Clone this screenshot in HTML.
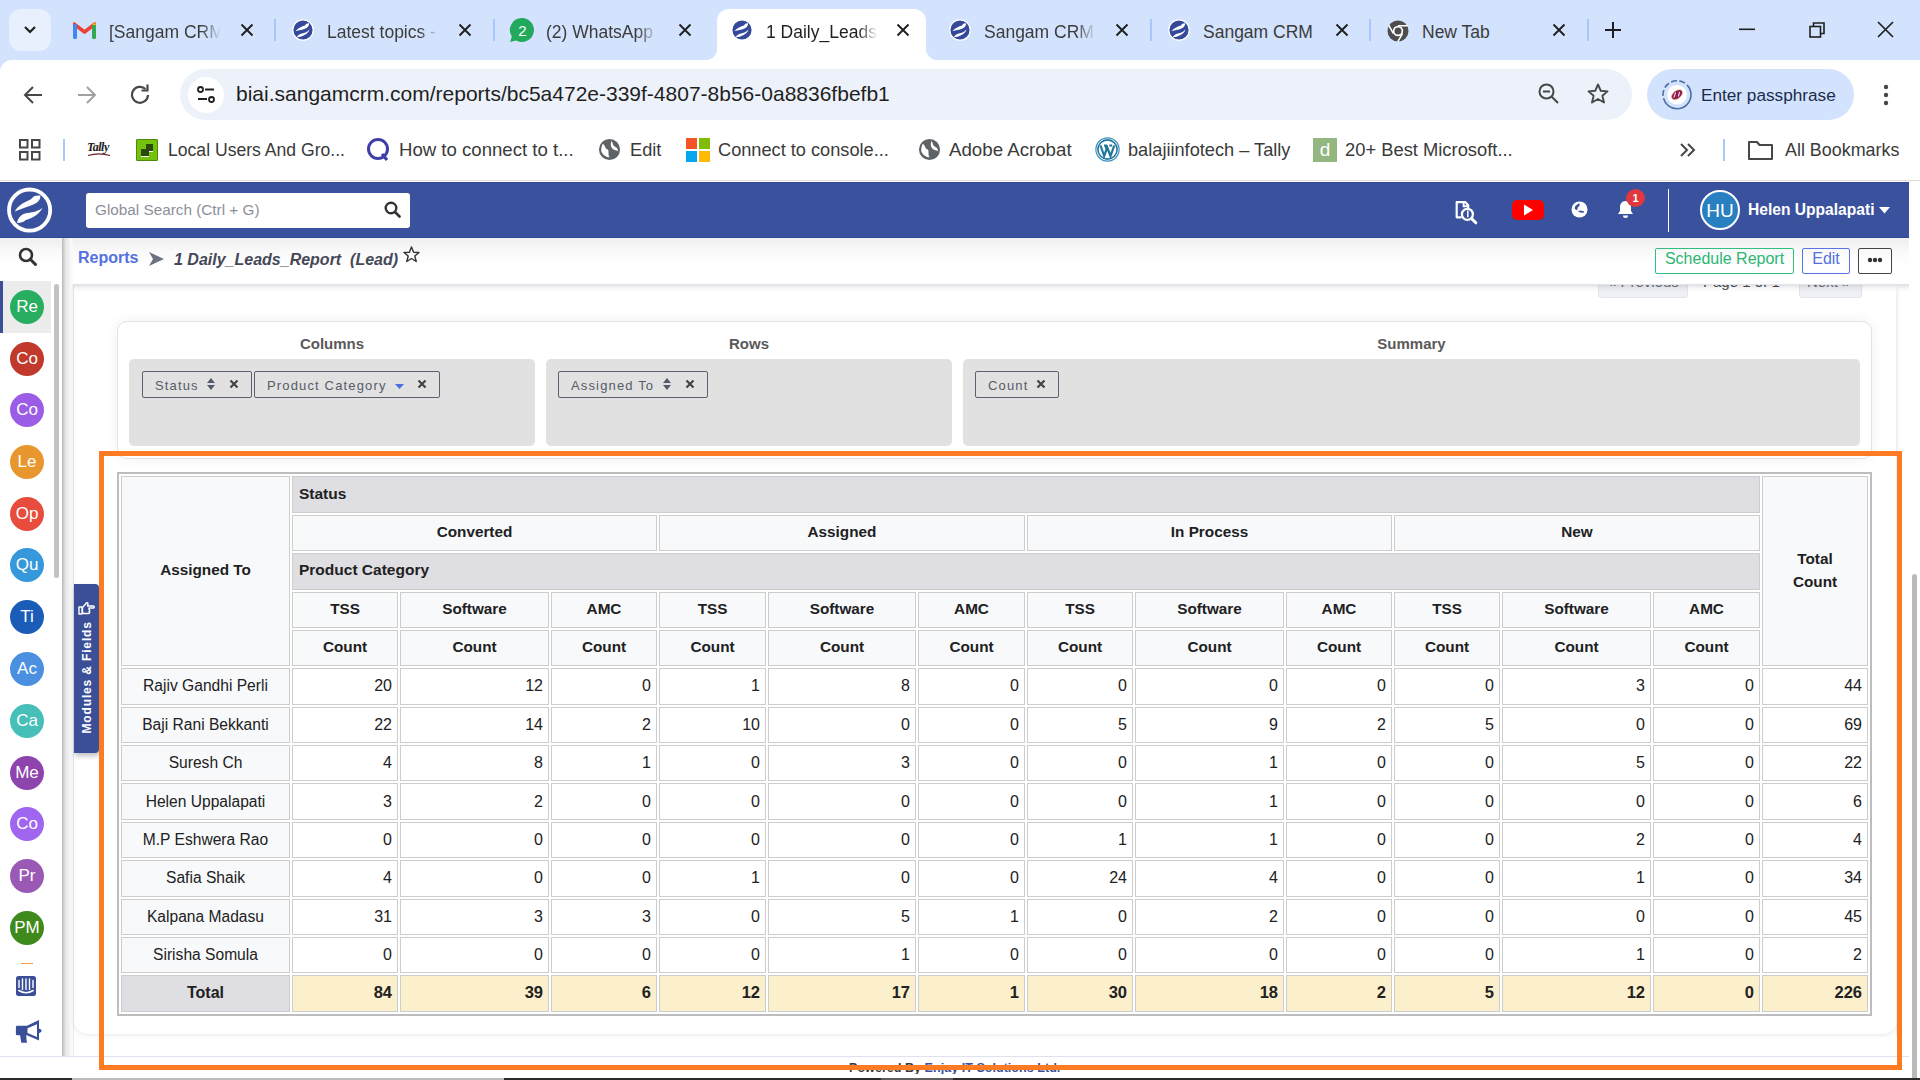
<!DOCTYPE html><html><head><meta charset="utf-8"><style>
*{box-sizing:border-box;margin:0;padding:0}
html,body{width:1920px;height:1080px;overflow:hidden;background:#fff;font-family:"Liberation Sans",sans-serif;position:relative}
.a{position:absolute}
.tabstrip{left:0;top:0;width:1920px;height:60px;background:#d3e3fd}
.toolbar{left:0;top:60px;width:1920px;height:62px;background:#fff}
.bmbar{left:0;top:122px;width:1920px;height:58px;background:#fff}
.tabtxt{font-size:17.5px;color:#1f1f1f;white-space:nowrap;overflow:hidden}
.bmtxt{font-size:18px;color:#3a3a3a;white-space:nowrap}
.hdr{left:0;top:182px;width:1909px;height:56px;background:#3a519d;border-top:1px solid #2c4791;border-bottom:1px solid #2f4993}
.side{left:0;top:238px;width:62px;height:818px;background:#fff}
.circ{width:34px;height:34px;border-radius:50%;color:#fff;font-size:17px;text-align:center;line-height:34px;left:10px}
.cell{position:absolute;border:1px solid #cdcdcd;font-size:16px;color:#212121;white-space:nowrap;display:flex;align-items:center}
.hd{background:#f8f9fb;font-weight:bold;font-size:15.3px;justify-content:center;padding-bottom:2px}
.gr{background:#dfdee3;font-weight:bold;font-size:15.5px;padding-left:6px;padding-bottom:2px}
.nm{background:#f8f9fb;justify-content:center;font-size:15.6px}
.vl{background:#fff;justify-content:flex-end;padding-right:5px}
.tl{background:#dfdee3;font-weight:bold;font-size:16px;justify-content:center;padding-bottom:0px}
.tv{background:#fcefcb;font-weight:bold;font-size:16.5px;justify-content:flex-end;padding-right:5px;padding-bottom:2px}
.chip{position:absolute;top:371px;height:27px;border:1.5px solid #5d6070;border-radius:2px;font-size:13px;letter-spacing:1.15px;color:#575b68;line-height:27px;padding-left:12px;white-space:nowrap}
.lbl{position:absolute;top:335px;font-size:15px;font-weight:bold;color:#5a5a5a;text-align:center}
.gbox{position:absolute;top:359px;height:87px;background:#e1e1e1;border-radius:5px}
</style></head><body>
<div class="a tabstrip"></div>
<div class="a" style="left:9px;top:9px;width:42px;height:42px;border-radius:12px;background:#e9f0fd"></div>
<svg class="a" style="left:22px;top:24px" width="16" height="12" viewBox="0 0 16 12"><path d="M3 3 L8 8 L13 3" stroke="#1f1f1f" stroke-width="2.2" fill="none"/></svg>
<div class="a" style="left:717px;top:9px;width:209px;height:51px;background:#fff;border-radius:12px 12px 0 0"></div>
<div class="a" style="left:705px;top:48px;width:12px;height:12px;background:radial-gradient(circle at 0 0,#d3e3fd 12px,#fff 12.5px)"></div>
<div class="a" style="left:926px;top:48px;width:12px;height:12px;background:radial-gradient(circle at 100% 0,#d3e3fd 12px,#fff 12.5px)"></div>
<svg class="a" style="left:73px;top:21px" width="23" height="18" viewBox="0 0 23 18"><path d="M1 17V3l10.5 8L22 3v14" fill="none" stroke="#ea4335" stroke-width="3.5" stroke-linejoin="round"/><rect x="0" y="3" width="4" height="15" rx="1.5" fill="#4285f4"/><rect x="19" y="3" width="4" height="15" rx="1.5" fill="#34a853"/><path d="M19 4 L22 1.5 L23 4Z" fill="#fbbc04"/></svg>
<div class="a tabtxt" style="left:109px;top:20px;width:112px;height:24px;line-height:24px;color:#3c3c3c;-webkit-mask-image:linear-gradient(90deg,#000 82%,transparent 100%)">[Sangam CRM</div>
<svg class="a" style="left:240px;top:23px" width="14" height="14" viewBox="0 0 14 14"><path d="M1.5 1.5L12.5 12.5M12.5 1.5L1.5 12.5" stroke="#1f1f1f" stroke-width="1.9"/></svg>
<svg class="a" style="left:292px;top:19px" width="22" height="22" viewBox="-11 -11 22 22"><circle cx="0" cy="0" r="10.2" fill="#34499a" stroke="#fff" stroke-width="1.2"/><path d="M-7.5 1.2C-5 -2 -1 -3.5 2 -4.5C3 -6 4 -6.8 6.2 -6.6C6.2 -4.5 4.6 -2.4 2.5 -1.4C-1 0.2 -4 0.2 -7.5 1.2Z" fill="#fff"/><path d="M6.6 -0.8C4.6 2 1.6 3 -1 3.5C-3.5 4 -5.6 5.5 -6.2 7.2C-3.5 7.2 -1 6.2 1 5.2C3.6 4 5.6 2.5 6.6 -0.8Z" fill="#fff"/></svg>
<div class="a tabtxt" style="left:327px;top:20px;width:112px;height:24px;line-height:24px;color:#3c3c3c;-webkit-mask-image:linear-gradient(90deg,#000 82%,transparent 100%)">Latest topics -</div>
<svg class="a" style="left:458px;top:23px" width="14" height="14" viewBox="0 0 14 14"><path d="M1.5 1.5L12.5 12.5M12.5 1.5L1.5 12.5" stroke="#1f1f1f" stroke-width="1.9"/></svg>
<svg class="a" style="left:509px;top:17px" width="26" height="26" viewBox="0 0 26 26"><path d="M13 1A12 12 0 1 1 7 23.4L1.2 25L2.8 19.5A12 12 0 0 1 13 1Z" fill="#22a95b"/><text x="13.5" y="18.5" font-family="Liberation Sans" font-size="15" fill="#fff" text-anchor="middle">2</text></svg>
<div class="a tabtxt" style="left:546px;top:20px;width:112px;height:24px;line-height:24px;color:#3c3c3c;-webkit-mask-image:linear-gradient(90deg,#000 82%,transparent 100%)">(2) WhatsApp</div>
<svg class="a" style="left:678px;top:23px" width="14" height="14" viewBox="0 0 14 14"><path d="M1.5 1.5L12.5 12.5M12.5 1.5L1.5 12.5" stroke="#1f1f1f" stroke-width="1.9"/></svg>
<svg class="a" style="left:731px;top:19px" width="22" height="22" viewBox="-11 -11 22 22"><circle cx="0" cy="0" r="10.2" fill="#34499a" stroke="#fff" stroke-width="1.2"/><path d="M-7.5 1.2C-5 -2 -1 -3.5 2 -4.5C3 -6 4 -6.8 6.2 -6.6C6.2 -4.5 4.6 -2.4 2.5 -1.4C-1 0.2 -4 0.2 -7.5 1.2Z" fill="#fff"/><path d="M6.6 -0.8C4.6 2 1.6 3 -1 3.5C-3.5 4 -5.6 5.5 -6.2 7.2C-3.5 7.2 -1 6.2 1 5.2C3.6 4 5.6 2.5 6.6 -0.8Z" fill="#fff"/></svg>
<div class="a tabtxt" style="left:766px;top:20px;width:112px;height:24px;line-height:24px;color:#1f1f1f;-webkit-mask-image:linear-gradient(90deg,#000 82%,transparent 100%)">1 Daily_Leads_</div>
<svg class="a" style="left:896px;top:23px" width="14" height="14" viewBox="0 0 14 14"><path d="M1.5 1.5L12.5 12.5M12.5 1.5L1.5 12.5" stroke="#1f1f1f" stroke-width="1.9"/></svg>
<svg class="a" style="left:949px;top:19px" width="22" height="22" viewBox="-11 -11 22 22"><circle cx="0" cy="0" r="10.2" fill="#34499a" stroke="#fff" stroke-width="1.2"/><path d="M-7.5 1.2C-5 -2 -1 -3.5 2 -4.5C3 -6 4 -6.8 6.2 -6.6C6.2 -4.5 4.6 -2.4 2.5 -1.4C-1 0.2 -4 0.2 -7.5 1.2Z" fill="#fff"/><path d="M6.6 -0.8C4.6 2 1.6 3 -1 3.5C-3.5 4 -5.6 5.5 -6.2 7.2C-3.5 7.2 -1 6.2 1 5.2C3.6 4 5.6 2.5 6.6 -0.8Z" fill="#fff"/></svg>
<div class="a tabtxt" style="left:984px;top:20px;width:112px;height:24px;line-height:24px;color:#3c3c3c;-webkit-mask-image:linear-gradient(90deg,#000 82%,transparent 100%)">Sangam CRM</div>
<svg class="a" style="left:1115px;top:23px" width="14" height="14" viewBox="0 0 14 14"><path d="M1.5 1.5L12.5 12.5M12.5 1.5L1.5 12.5" stroke="#1f1f1f" stroke-width="1.9"/></svg>
<svg class="a" style="left:1168px;top:19px" width="22" height="22" viewBox="-11 -11 22 22"><circle cx="0" cy="0" r="10.2" fill="#34499a" stroke="#fff" stroke-width="1.2"/><path d="M-7.5 1.2C-5 -2 -1 -3.5 2 -4.5C3 -6 4 -6.8 6.2 -6.6C6.2 -4.5 4.6 -2.4 2.5 -1.4C-1 0.2 -4 0.2 -7.5 1.2Z" fill="#fff"/><path d="M6.6 -0.8C4.6 2 1.6 3 -1 3.5C-3.5 4 -5.6 5.5 -6.2 7.2C-3.5 7.2 -1 6.2 1 5.2C3.6 4 5.6 2.5 6.6 -0.8Z" fill="#fff"/></svg>
<div class="a tabtxt" style="left:1203px;top:20px;width:112px;height:24px;line-height:24px;color:#3c3c3c">Sangam CRM</div>
<svg class="a" style="left:1335px;top:23px" width="14" height="14" viewBox="0 0 14 14"><path d="M1.5 1.5L12.5 12.5M12.5 1.5L1.5 12.5" stroke="#1f1f1f" stroke-width="1.9"/></svg>
<svg class="a" style="left:1387px;top:20px" width="22" height="22" viewBox="0 0 22 22"><circle cx="11" cy="11" r="10.5" fill="#4d4d4d"/><circle cx="11" cy="11" r="5.2" fill="#fff"/><circle cx="11" cy="11" r="3.5" fill="#4d4d4d"/><path d="M11 5.8H20.5M6.5 13.6L1.8 5.5M15.5 13.6L10.7 21.8" stroke="#fff" stroke-width="1.5"/></svg>
<div class="a tabtxt" style="left:1422px;top:20px;width:112px;height:24px;line-height:24px;color:#3c3c3c">New Tab</div>
<svg class="a" style="left:1552px;top:23px" width="14" height="14" viewBox="0 0 14 14"><path d="M1.5 1.5L12.5 12.5M12.5 1.5L1.5 12.5" stroke="#1f1f1f" stroke-width="1.9"/></svg>
<div class="a" style="left:274px;top:19px;width:2px;height:22px;background:#a8c7fa"></div>
<div class="a" style="left:493px;top:19px;width:2px;height:22px;background:#a8c7fa"></div>
<div class="a" style="left:1150px;top:19px;width:2px;height:22px;background:#a8c7fa"></div>
<div class="a" style="left:1369px;top:19px;width:2px;height:22px;background:#a8c7fa"></div>
<div class="a" style="left:1587px;top:19px;width:2px;height:22px;background:#a8c7fa"></div>
<svg class="a" style="left:1603px;top:20px" width="20" height="20" viewBox="0 0 20 20"><path d="M10 2V18M2 10H18" stroke="#1f1f1f" stroke-width="2"/></svg>
<svg class="a" style="left:1739px;top:28px" width="16" height="3"><rect width="16" height="1.6" y="0.5" fill="#1f1f1f"/></svg>
<svg class="a" style="left:1809px;top:22px" width="16" height="16" viewBox="0 0 16 16"><rect x="1" y="4.5" width="10.5" height="10.5" fill="none" stroke="#1f1f1f" stroke-width="1.6"/><path d="M4.5 4.5V1H15V11.5H11.5" fill="none" stroke="#1f1f1f" stroke-width="1.6"/></svg>
<svg class="a" style="left:1877px;top:21px" width="17" height="17" viewBox="0 0 17 17"><path d="M1 1L16 16M16 1L1 16" stroke="#1f1f1f" stroke-width="1.7"/></svg>
<div class="a toolbar"></div>
<div class="a" style="left:0;top:60px;width:12px;height:12px;background:radial-gradient(circle at 100% 100%,#fff 11.5px,#d3e3fd 12.5px)"></div>
<svg class="a" style="left:22px;top:84px" width="22" height="22" viewBox="0 0 22 22"><path d="M20 11H3M11 3L3 11L11 19" fill="none" stroke="#474747" stroke-width="2"/></svg>
<svg class="a" style="left:76px;top:84px" width="22" height="22" viewBox="0 0 22 22"><path d="M2 11H19M11 3L19 11L11 19" fill="none" stroke="#a0a0a0" stroke-width="2"/></svg>
<svg class="a" style="left:130px;top:84px" width="22" height="22" viewBox="0 0 22 22"><path d="M18 11A8 8 0 1 1 15.5 5" fill="none" stroke="#474747" stroke-width="2.2"/><path d="M11.5 4.5H17.5V-1.5" transform="translate(0,2)" fill="none" stroke="#474747" stroke-width="2.2"/></svg>
<div class="a" style="left:180px;top:69px;width:1452px;height:51px;border-radius:26px;background:#edf2fa"></div>
<div class="a" style="left:188px;top:77px;width:36px;height:36px;border-radius:50%;background:#fff"></div>
<svg class="a" style="left:196px;top:85px" width="20" height="20" viewBox="0 0 20 20"><circle cx="4.5" cy="4.5" r="2.5" fill="none" stroke="#1f1f1f" stroke-width="1.8"/><path d="M9 4.5H18M2 14H11" stroke="#1f1f1f" stroke-width="1.8"/><circle cx="15.5" cy="14.5" r="2.5" fill="none" stroke="#1f1f1f" stroke-width="1.8"/></svg>
<div class="a" style="left:236px;top:81px;font-size:21px;line-height:26px;color:#1f1f1f;white-space:nowrap">biai.sangamcrm.com/reports/bc5a472e-339f-4807-8b56-0a8836fbefb1</div>
<svg class="a" style="left:1537px;top:82px" width="24" height="24" viewBox="0 0 24 24"><circle cx="9.5" cy="9.5" r="7" fill="none" stroke="#474747" stroke-width="2"/><path d="M14.5 14.5L21 21M6 9.5H13" stroke="#474747" stroke-width="2"/></svg>
<svg class="a" style="left:1586px;top:82px" width="24" height="24" viewBox="0 0 24 24"><path d="M12 2.5L14.8 8.8L21.5 9.4L16.4 13.8L18 20.5L12 17L6 20.5L7.6 13.8L2.5 9.4L9.2 8.8Z" fill="none" stroke="#474747" stroke-width="1.9" stroke-linejoin="round"/></svg>
<div class="a" style="left:1647px;top:69px;width:207px;height:51px;border-radius:26px;background:#d3e3fd"></div>
<svg class="a" style="left:1661px;top:79px" width="32" height="32" viewBox="0 0 32 32"><circle cx="16" cy="15.7" r="14" fill="none" stroke="#4f6ea3" stroke-width="1.6" stroke-dasharray="40 2.5 6 2.5 6 2.5 6 2.5 6 2.5"/><circle cx="16" cy="15.7" r="9.8" fill="#fff"/><ellipse cx="16" cy="15.7" rx="6.2" ry="3.8" transform="rotate(-38 16 15.7)" fill="#8e1a5c" stroke="#e8a020" stroke-width="0.5"/><path d="M13 18.5L14.5 13.5M17.5 17.5L18.5 13" stroke="#fff" stroke-width="1"/></svg>
<div class="a" style="left:1701px;top:83px;font-size:17.2px;line-height:24px;color:#1b2b4b;white-space:nowrap">Enter passphrase</div>
<svg class="a" style="left:1880px;top:83px" width="12" height="24" viewBox="0 0 12 24"><circle cx="6" cy="4" r="2.2" fill="#474747"/><circle cx="6" cy="12" r="2.2" fill="#474747"/><circle cx="6" cy="20" r="2.2" fill="#474747"/></svg>
<svg class="a" style="left:19px;top:139px" width="22" height="22" viewBox="0 0 22 22"><g fill="none" stroke="#474747" stroke-width="2"><rect x="1" y="1" width="7.5" height="7.5"/><rect x="13" y="1" width="7.5" height="7.5"/><rect x="1" y="13" width="7.5" height="7.5"/><rect x="13" y="13" width="7.5" height="7.5"/></g></svg>
<div class="a" style="left:63px;top:139px;width:2px;height:22px;background:#a8c7fa"></div>
<div class="a" style="left:87px;top:140px;font-size:12px;font-style:italic;font-weight:bold;color:#1a1a1a;font-family:'Liberation Serif',serif;letter-spacing:-0.5px">Tally</div><svg class="a" style="left:87px;top:152px" width="24" height="5" viewBox="0 0 24 5"><path d="M1 3.5C8 1.5 16 1.5 23 3.5" fill="none" stroke="#6b1d1d" stroke-width="1.3"/></svg>
<div class="a" style="left:136px;top:139px;width:22px;height:22px;background:#74c20e;border:1px solid #4e8a10;border-radius:1px"></div><div class="a" style="left:141px;top:149px;width:8px;height:7px;background:#2a4a10"></div><div class="a" style="left:146px;top:144px;width:7px;height:7px;background:#2a4a10"></div><div class="a" style="left:141px;top:156px;width:8px;height:1px;background:#fff"></div><div class="a" style="left:149px;top:151px;width:4px;height:1px;background:#fff"></div>
<div class="a bmtxt" style="left:168px;top:139.3px;line-height:22px;font-size:17.60px">Local Users And Gro...</div>
<div class="a bmtxt" style="left:399px;top:139.3px;line-height:22px;font-size:18.60px">How to connect to t...</div>
<div class="a bmtxt" style="left:630px;top:139.3px;line-height:22px;font-size:18.20px">Edit</div>
<div class="a bmtxt" style="left:718px;top:139.3px;line-height:22px;font-size:18.20px">Connect to console...</div>
<div class="a bmtxt" style="left:949px;top:139.3px;line-height:22px;font-size:18.70px">Adobe Acrobat</div>
<div class="a bmtxt" style="left:1128px;top:139.3px;line-height:22px;font-size:18.20px">balajiinfotech – Tally</div>
<div class="a bmtxt" style="left:1345px;top:139.3px;line-height:22px;font-size:18.35px">20+ Best Microsoft...</div>
<div class="a bmtxt" style="left:1785px;top:139.3px;line-height:22px;font-size:17.90px">All Bookmarks</div>
<svg class="a" style="left:366px;top:137px" width="25" height="25" viewBox="0 0 25 25"><circle cx="12" cy="12" r="9.5" fill="none" stroke="#3f3fa8" stroke-width="3"/><path d="M16 17L21 23" stroke="#3f3fa8" stroke-width="3"/></svg>
<svg class="a" style="left:598px;top:138px" width="23" height="23" viewBox="0 0 24 24"><circle cx="12" cy="12" r="11" fill="#5f6368"/><path d="M5 6C8 8 7 11 10 12C12 13 10 17 12 20C9 20 5 18 3.5 14C3 11 4 8 5 6ZM14 3C16 5 15 8 18 9C20 10 21 12 21 14C19 12 16 13 15 11C13 9 13 6 14 3Z" fill="#fff"/></svg>
<svg class="a" style="left:918px;top:138px" width="23" height="23" viewBox="0 0 24 24"><circle cx="12" cy="12" r="11" fill="#5f6368"/><path d="M5 6C8 8 7 11 10 12C12 13 10 17 12 20C9 20 5 18 3.5 14C3 11 4 8 5 6ZM14 3C16 5 15 8 18 9C20 10 21 12 21 14C19 12 16 13 15 11C13 9 13 6 14 3Z" fill="#fff"/></svg>
<div class="a" style="left:686px;top:138px;width:11px;height:11px;background:#f35325"></div><div class="a" style="left:699px;top:138px;width:11px;height:11px;background:#81bc06"></div><div class="a" style="left:686px;top:151px;width:11px;height:11px;background:#05a6f0"></div><div class="a" style="left:699px;top:151px;width:11px;height:11px;background:#ffba08"></div>
<svg class="a" style="left:1095px;top:137px" width="25" height="25" viewBox="0 0 25 25"><circle cx="12.5" cy="12.5" r="11.6" fill="#fff" stroke="#3a8fbf" stroke-width="1.2"/><circle cx="12.5" cy="12.5" r="9.6" fill="none" stroke="#21759b" stroke-width="1.6"/><path d="M5.5 8.5L9.2 19L11.6 12.2L10.3 8.5M9 8.5H12.2M11.5 8.5L15.5 19L19.3 8.5M14.3 8.5H17.2" fill="none" stroke="#21759b" stroke-width="2.2"/></svg>
<div class="a" style="left:1313px;top:138px;width:24px;height:24px;background:#94b681;color:#fff;font-size:19px;text-align:center;line-height:23px">d</div>
<svg class="a" style="left:1678px;top:141px" width="20" height="18" viewBox="0 0 20 18"><path d="M3 3L9 9L3 15M10 3L16 9L10 15" fill="none" stroke="#474747" stroke-width="2"/></svg>
<div class="a" style="left:1723px;top:139px;width:2px;height:22px;background:#a8c7fa"></div>
<svg class="a" style="left:1747px;top:139px" width="27" height="22" viewBox="0 0 27 22"><path d="M2 3H10L12.5 6H25V20H2Z" fill="none" stroke="#474747" stroke-width="2" stroke-linejoin="round"/></svg>
<div class="a" style="left:0;top:180px;width:1920px;height:1px;background:#dcdcdc"></div>
<div class="a hdr"></div>
<svg class="a" style="left:4px;top:184px" width="52" height="52" viewBox="0 0 52 52"><circle cx="25.6" cy="26.1" r="20.6" fill="none" stroke="#fff" stroke-width="3.8"/><path d="M10.8 27.6C13 23 18 19 25.5 16C27.5 15 28.5 13.5 30 12.2C32 11.4 34.5 11.3 36.3 11.5C36.6 14 35.5 16.8 33 18.6C29 21.5 21 23.5 10.8 27.6Z" fill="#fff"/><path d="M38.8 23.5C35 27 30 28.4 23 28.9C18 29.6 13.6 33.5 13.2 39C16.5 39 19.5 38.3 21.8 36C26 34.5 34 32.5 38.8 23.5Z" fill="#fff"/></svg>
<div class="a" style="left:86px;top:193px;width:324px;height:35px;background:#fff;border-radius:3px"></div>
<div class="a" style="left:95px;top:200px;font-size:15.3px;line-height:20px;color:#8b8f9b;white-space:nowrap">Global Search (Ctrl + G)</div>
<svg class="a" style="left:384px;top:201px" width="17" height="17" viewBox="0 0 17 17"><circle cx="7" cy="7" r="5.3" fill="none" stroke="#333" stroke-width="2.4"/><path d="M11 11L15.5 15.5" stroke="#333" stroke-width="2.6" stroke-linecap="round"/></svg>
<svg class="a" style="left:1450px;top:196px" width="32" height="32" viewBox="0 0 32 32"><path d="M11.5 21.3H6.7V6.1H15.2L18.2 9.2V12" stroke="#fff" stroke-width="2.2" fill="none" stroke-linejoin="round"/><path d="M13.6 6.5V10.2H17.6" stroke="#fff" stroke-width="1.9" fill="none"/><circle cx="17.4" cy="18.3" r="5.5" stroke="#fff" stroke-width="2.3" fill="none"/><path d="M17.8 14.6V21.2" stroke="#fff" stroke-width="1.5"/><path d="M21.6 22.6L25.8 26.8" stroke="#fff" stroke-width="3" stroke-linecap="round"/></svg>
<div class="a" style="left:1512px;top:200px;width:32px;height:20px;border-radius:5px;background:#f00"></div>
<svg class="a" style="left:1523px;top:204px" width="11" height="12" viewBox="0 0 11 12"><path d="M1 0.5L10 6L1 11.5Z" fill="#fff"/></svg>
<svg class="a" style="left:1571px;top:201px" width="17" height="17" viewBox="0 0 17 17"><circle cx="8.5" cy="8.5" r="8" fill="#fff"/><path d="M4.2 5.2L7.5 2.6L8.8 2.8L8.2 5.2L6.8 6.2L6.5 8.6L5.2 9L3.6 7.6Z" fill="#3a519d"/><path d="M6.8 10.2L9.6 9.4L12.8 10.2L13.2 11.4L11.2 11.8L8.6 11.2Z" fill="#3a519d"/></svg>
<svg class="a" style="left:1617px;top:200px" width="17" height="19" viewBox="0 0 17 19"><path d="M8.5 1C5 1 3 4 3 7V11L1 14H16L14 11V7C14 4 12 1 8.5 1Z" fill="#fff"/><path d="M6 15.5A2.5 2.5 0 0 0 11 15.5Z" fill="#fff"/></svg>
<div class="a" style="left:1626px;top:189px;width:19px;height:18px;border-radius:50%;background:#e0383e;color:#fff;font-size:11px;font-weight:bold;text-align:center;line-height:18px">1</div>
<div class="a" style="left:1668px;top:189px;width:1px;height:43px;background:#fff"></div>
<div class="a" style="left:1700px;top:190px;width:40px;height:40px;border-radius:50%;background:#2980c0;border:2px solid #fff;color:#fff;font-size:19px;text-align:center;line-height:37px">HU</div>
<div class="a" style="left:1748px;top:200px;font-size:15.6px;font-weight:bold;color:#fff;line-height:20px;white-space:nowrap">Helen Uppalapati</div>
<svg class="a" style="left:1879px;top:207px" width="11" height="7" viewBox="0 0 11 7"><path d="M0 0H11L5.5 6.5Z" fill="#fff"/></svg>
<div class="a side"></div>
<div class="a" style="left:0;top:238px;width:62px;height:40px;background:linear-gradient(180deg,#f6f5f0 0,#efefef 1px,#f8f8f8 12px,#fdfdfd 22px,#fff 30px)"></div>
<div class="a" style="left:73px;top:284px;width:1px;height:772px;background:#e3e6ee"></div>
<svg class="a" style="left:18px;top:247px" width="20" height="20" viewBox="0 0 20 20"><circle cx="8" cy="8" r="6" fill="none" stroke="#333" stroke-width="2.6"/><path d="M12.5 12.5L17.5 17.5" stroke="#333" stroke-width="3" stroke-linecap="round"/></svg>
<div class="a" style="left:0;top:281px;width:51px;height:52px;background:#ececec"></div><div class="a" style="left:0;top:281px;width:3px;height:52px;background:#3b4f99"></div>
<div class="a" style="left:54px;top:284px;width:5px;height:294px;border-radius:3px;background:#c1c1c6"></div>
<div class="a circ" style="top:289.7px;background:#27ae60">Re</div>
<div class="a circ" style="top:342.0px;background:#c0392b">Co</div>
<div class="a circ" style="top:393.3px;background:#9b5de5">Co</div>
<div class="a circ" style="top:445.0px;background:#e8972f">Le</div>
<div class="a circ" style="top:496.5px;background:#e74c3c">Op</div>
<div class="a circ" style="top:548.0px;background:#3498db">Qu</div>
<div class="a circ" style="top:600.0px;background:#1a5cb8">Ti</div>
<div class="a circ" style="top:652.0px;background:#4a8fe0">Ac</div>
<div class="a circ" style="top:704.0px;background:#45bfb8">Ca</div>
<div class="a circ" style="top:755.5px;background:#8e44ad">Me</div>
<div class="a circ" style="top:807.0px;background:#a066f0">Co</div>
<div class="a circ" style="top:859.0px;background:#9b59b6">Pr</div>
<div class="a circ" style="top:911.0px;background:#3f8a1c">PM</div>
<div class="a" style="left:21px;top:963px;width:12px;height:1px;background:#f39a3c"></div>
<svg class="a" style="left:16px;top:976px" width="20" height="20" viewBox="0 0 20 20"><rect width="20" height="20" rx="2.5" fill="#3b4f99"/><path d="M3 4.4V11.4M6.5 2.9V13.4M10 2.9V13.4M13.5 2.9V13.4M17 4.4V11.4" stroke="#fff" stroke-width="1.4" stroke-linecap="round"/><path d="M2.8 14.5Q10 19 17.2 14.5" stroke="#fff" stroke-width="1.5" fill="none" stroke-linecap="round"/></svg>
<svg class="a" style="left:10px;top:1012px" width="40" height="40" viewBox="0 0 40 40"><path d="M7.3 13.7H17L29 8V28.6L17 23.3H7.3Q5.9 23.3 5.9 21.9V15.1Q5.9 13.7 7.3 13.7Z" fill="#3b4f99"/><path d="M17.5 16.2L27 12.2V25L17.5 21Z" fill="#fff"/><path d="M10 23H16.2L16.5 28L17 30.7H11.3Z" fill="#3b4f99"/><path d="M29 16.5Q31.7 17.5 31.7 18.8Q31.7 20.1 29 21.2Z" fill="#3b4f99"/></svg>
<div class="a" style="left:1598px;top:270px;width:90px;height:28px;background:#eef0f5;border:1px solid #e3e5eb;border-radius:3px"></div>
<div class="a" style="left:1799px;top:270px;width:63px;height:28px;background:#eef0f5;border:1px solid #e3e5eb;border-radius:3px"></div>
<div class="a" style="left:1608px;top:272px;font-size:15px;line-height:20px;color:#6e6e78;white-space:nowrap">&laquo; Previous</div>
<div class="a" style="left:1703px;top:272px;font-size:15px;line-height:20px;color:#4a4a52;white-space:nowrap">Page 1 of 1</div>
<div class="a" style="left:1807px;top:272px;font-size:15px;line-height:20px;color:#6e6e78;white-space:nowrap">Next &raquo;</div>
<div class="a" style="left:62px;top:238px;width:1847px;height:46px;background:linear-gradient(180deg,#f6f5f0 0,#efefef 1px,#f8f8f8 12px,#fdfdfd 22px,#fff 30px)"></div>
<div class="a" style="left:62px;top:284px;width:1847px;height:1px;background:#dfe3ee"></div>
<div class="a" style="left:62px;top:285px;width:1847px;height:7px;background:linear-gradient(180deg,rgba(0,0,0,0.11),rgba(0,0,0,0.04) 3px,rgba(0,0,0,0))"></div>
<div class="a" style="left:62px;top:238px;width:12px;height:818px;background:linear-gradient(90deg,#b9b9b9,#e6e6e6 30%,#fafafa 80%,rgba(255,255,255,0))"></div>
<div class="a" style="left:78px;top:248px;font-size:16px;font-weight:bold;color:#5470e0;line-height:20px">Reports</div>
<svg class="a" style="left:149px;top:252px" width="15" height="14" viewBox="0 0 15 14"><path d="M0 0L15 7L0 14L4 7Z" fill="#6c7080"/></svg>
<div class="a" style="left:174px;top:250px;font-size:16px;font-weight:bold;font-style:italic;color:#464857;line-height:20px;white-space:nowrap">1 Daily_Leads_Report &nbsp;(Lead)</div>
<svg class="a" style="left:403px;top:246px" width="17" height="17" viewBox="0 0 17 17"><path d="M8.5 1L10.6 6.2L16 6.5L11.8 10L13.2 15.5L8.5 12.5L3.8 15.5L5.2 10L1 6.5L6.4 6.2Z" fill="none" stroke="#333" stroke-width="1.4" stroke-linejoin="round"/></svg>
<div class="a" style="left:1655px;top:248px;width:139px;height:26px;border:1.5px solid #2ec07f;border-radius:2px;color:#2bb673;font-size:16px;text-align:center;line-height:19px">Schedule Report</div>
<div class="a" style="left:1802px;top:248px;width:48px;height:26px;border:1.5px solid #5a74e6;border-radius:2px;color:#5470e0;font-size:16px;text-align:center;line-height:19px">Edit</div>
<div class="a" style="left:1858px;top:248px;width:34px;height:26px;border:1.5px solid #444;border-radius:2px"></div>
<svg class="a" style="left:1867px;top:257px" width="16" height="6" viewBox="0 0 16 6"><circle cx="3" cy="3" r="2.2" fill="#333"/><circle cx="8" cy="3" r="2.2" fill="#333"/><circle cx="13" cy="3" r="2.2" fill="#333"/></svg>
<div class="a" style="left:1896px;top:286px;width:1px;height:750px;background:#eceef2"></div>
<div class="a" style="left:74px;top:286px;width:1823px;height:748px;border-radius:0 0 14px 14px;box-shadow:0 1px 4px rgba(60,70,110,0.13);clip-path:inset(0 -10px -10px -10px)"></div>
<div class="a" style="left:117px;top:321px;width:1755px;height:138px;border:1px solid #e2e2e2;border-radius:10px;background:#fff;box-shadow:0 0 14px rgba(0,0,0,0.06)"></div>
<div class="lbl" style="left:129px;width:406px">Columns</div>
<div class="lbl" style="left:546px;width:406px">Rows</div>
<div class="lbl" style="left:963px;width:897px">Summary</div>
<div class="gbox" style="left:129px;width:406px"></div>
<div class="gbox" style="left:546px;width:406px"></div>
<div class="gbox" style="left:963px;width:897px"></div>
<div class="chip" style="left:142px;width:110px">Status</div>
<svg class="a" style="left:207px;top:378px" width="8" height="12" viewBox="0 0 8 12"><path d="M4 0L8 5H0Z M0 7H8L4 12Z" fill="#555b6b"/></svg>
<svg class="a" style="left:229px;top:379px" width="10" height="10" viewBox="0 0 10 10"><path d="M1.5 1.5L8.5 8.5M8.5 1.5L1.5 8.5" stroke="#444" stroke-width="2.2"/></svg>
<div class="chip" style="left:254px;width:186px">Product Category</div>
<svg class="a" style="left:395px;top:384px" width="9" height="6" viewBox="0 0 9 6"><path d="M0 0H9L4.5 5Z" fill="#4a6ee0"/></svg>
<svg class="a" style="left:417px;top:379px" width="10" height="10" viewBox="0 0 10 10"><path d="M1.5 1.5L8.5 8.5M8.5 1.5L1.5 8.5" stroke="#444" stroke-width="2.2"/></svg>
<div class="chip" style="left:558px;width:150px">Assigned To</div>
<svg class="a" style="left:663px;top:378px" width="8" height="12" viewBox="0 0 8 12"><path d="M4 0L8 5H0Z M0 7H8L4 12Z" fill="#555b6b"/></svg>
<svg class="a" style="left:685px;top:379px" width="10" height="10" viewBox="0 0 10 10"><path d="M1.5 1.5L8.5 8.5M8.5 1.5L1.5 8.5" stroke="#444" stroke-width="2.2"/></svg>
<div class="chip" style="left:975px;width:84px">Count</div>
<svg class="a" style="left:1036px;top:379px" width="10" height="10" viewBox="0 0 10 10"><path d="M1.5 1.5L8.5 8.5M8.5 1.5L1.5 8.5" stroke="#444" stroke-width="2.2"/></svg>
<div class="a" style="left:117px;top:472px;width:1755px;height:544px;border:2px solid #bdbdbd;background:#fff"></div>
<div class="cell hd" style="left:121.00px;top:476.400px;width:169.00px;height:189.875px">Assigned To</div>
<div class="cell hd" style="left:1762.00px;top:476.400px;width:106.00px;height:189.875px"><div style="text-align:center;line-height:23px">Total<br>Count</div></div>
<div class="cell gr" style="left:292.00px;top:476.400px;width:1468.00px;height:36.375px">Status</div>
<div class="cell hd" style="left:292.00px;top:514.775px;width:365.00px;height:36.375px">Converted</div>
<div class="cell hd" style="left:659.00px;top:514.775px;width:366.00px;height:36.375px">Assigned</div>
<div class="cell hd" style="left:1027.00px;top:514.775px;width:365.00px;height:36.375px">In Process</div>
<div class="cell hd" style="left:1394.00px;top:514.775px;width:366.00px;height:36.375px">New</div>
<div class="cell gr" style="left:292.00px;top:553.150px;width:1468.00px;height:36.375px">Product Category</div>
<div class="cell hd" style="left:292.00px;top:591.525px;width:106.00px;height:36.375px">TSS</div>
<div class="cell hd" style="left:292.00px;top:629.900px;width:106.00px;height:36.375px">Count</div>
<div class="cell hd" style="left:400.00px;top:591.525px;width:149.00px;height:36.375px">Software</div>
<div class="cell hd" style="left:400.00px;top:629.900px;width:149.00px;height:36.375px">Count</div>
<div class="cell hd" style="left:551.00px;top:591.525px;width:106.00px;height:36.375px">AMC</div>
<div class="cell hd" style="left:551.00px;top:629.900px;width:106.00px;height:36.375px">Count</div>
<div class="cell hd" style="left:659.00px;top:591.525px;width:107.00px;height:36.375px">TSS</div>
<div class="cell hd" style="left:659.00px;top:629.900px;width:107.00px;height:36.375px">Count</div>
<div class="cell hd" style="left:768.00px;top:591.525px;width:148.00px;height:36.375px">Software</div>
<div class="cell hd" style="left:768.00px;top:629.900px;width:148.00px;height:36.375px">Count</div>
<div class="cell hd" style="left:918.00px;top:591.525px;width:107.00px;height:36.375px">AMC</div>
<div class="cell hd" style="left:918.00px;top:629.900px;width:107.00px;height:36.375px">Count</div>
<div class="cell hd" style="left:1027.00px;top:591.525px;width:106.00px;height:36.375px">TSS</div>
<div class="cell hd" style="left:1027.00px;top:629.900px;width:106.00px;height:36.375px">Count</div>
<div class="cell hd" style="left:1135.00px;top:591.525px;width:149.00px;height:36.375px">Software</div>
<div class="cell hd" style="left:1135.00px;top:629.900px;width:149.00px;height:36.375px">Count</div>
<div class="cell hd" style="left:1286.00px;top:591.525px;width:106.00px;height:36.375px">AMC</div>
<div class="cell hd" style="left:1286.00px;top:629.900px;width:106.00px;height:36.375px">Count</div>
<div class="cell hd" style="left:1394.00px;top:591.525px;width:106.00px;height:36.375px">TSS</div>
<div class="cell hd" style="left:1394.00px;top:629.900px;width:106.00px;height:36.375px">Count</div>
<div class="cell hd" style="left:1502.00px;top:591.525px;width:149.00px;height:36.375px">Software</div>
<div class="cell hd" style="left:1502.00px;top:629.900px;width:149.00px;height:36.375px">Count</div>
<div class="cell hd" style="left:1653.00px;top:591.525px;width:107.00px;height:36.375px">AMC</div>
<div class="cell hd" style="left:1653.00px;top:629.900px;width:107.00px;height:36.375px">Count</div>
<div class="cell nm" style="left:121.00px;top:668.275px;width:169.00px;height:36.375px">Rajiv Gandhi Perli</div>
<div class="cell vl" style="left:292.00px;top:668.275px;width:106.00px;height:36.375px">20</div>
<div class="cell vl" style="left:400.00px;top:668.275px;width:149.00px;height:36.375px">12</div>
<div class="cell vl" style="left:551.00px;top:668.275px;width:106.00px;height:36.375px">0</div>
<div class="cell vl" style="left:659.00px;top:668.275px;width:107.00px;height:36.375px">1</div>
<div class="cell vl" style="left:768.00px;top:668.275px;width:148.00px;height:36.375px">8</div>
<div class="cell vl" style="left:918.00px;top:668.275px;width:107.00px;height:36.375px">0</div>
<div class="cell vl" style="left:1027.00px;top:668.275px;width:106.00px;height:36.375px">0</div>
<div class="cell vl" style="left:1135.00px;top:668.275px;width:149.00px;height:36.375px">0</div>
<div class="cell vl" style="left:1286.00px;top:668.275px;width:106.00px;height:36.375px">0</div>
<div class="cell vl" style="left:1394.00px;top:668.275px;width:106.00px;height:36.375px">0</div>
<div class="cell vl" style="left:1502.00px;top:668.275px;width:149.00px;height:36.375px">3</div>
<div class="cell vl" style="left:1653.00px;top:668.275px;width:107.00px;height:36.375px">0</div>
<div class="cell vl" style="left:1762.00px;top:668.275px;width:106.00px;height:36.375px">44</div>
<div class="cell nm" style="left:121.00px;top:706.650px;width:169.00px;height:36.375px">Baji Rani Bekkanti</div>
<div class="cell vl" style="left:292.00px;top:706.650px;width:106.00px;height:36.375px">22</div>
<div class="cell vl" style="left:400.00px;top:706.650px;width:149.00px;height:36.375px">14</div>
<div class="cell vl" style="left:551.00px;top:706.650px;width:106.00px;height:36.375px">2</div>
<div class="cell vl" style="left:659.00px;top:706.650px;width:107.00px;height:36.375px">10</div>
<div class="cell vl" style="left:768.00px;top:706.650px;width:148.00px;height:36.375px">0</div>
<div class="cell vl" style="left:918.00px;top:706.650px;width:107.00px;height:36.375px">0</div>
<div class="cell vl" style="left:1027.00px;top:706.650px;width:106.00px;height:36.375px">5</div>
<div class="cell vl" style="left:1135.00px;top:706.650px;width:149.00px;height:36.375px">9</div>
<div class="cell vl" style="left:1286.00px;top:706.650px;width:106.00px;height:36.375px">2</div>
<div class="cell vl" style="left:1394.00px;top:706.650px;width:106.00px;height:36.375px">5</div>
<div class="cell vl" style="left:1502.00px;top:706.650px;width:149.00px;height:36.375px">0</div>
<div class="cell vl" style="left:1653.00px;top:706.650px;width:107.00px;height:36.375px">0</div>
<div class="cell vl" style="left:1762.00px;top:706.650px;width:106.00px;height:36.375px">69</div>
<div class="cell nm" style="left:121.00px;top:745.025px;width:169.00px;height:36.375px">Suresh Ch</div>
<div class="cell vl" style="left:292.00px;top:745.025px;width:106.00px;height:36.375px">4</div>
<div class="cell vl" style="left:400.00px;top:745.025px;width:149.00px;height:36.375px">8</div>
<div class="cell vl" style="left:551.00px;top:745.025px;width:106.00px;height:36.375px">1</div>
<div class="cell vl" style="left:659.00px;top:745.025px;width:107.00px;height:36.375px">0</div>
<div class="cell vl" style="left:768.00px;top:745.025px;width:148.00px;height:36.375px">3</div>
<div class="cell vl" style="left:918.00px;top:745.025px;width:107.00px;height:36.375px">0</div>
<div class="cell vl" style="left:1027.00px;top:745.025px;width:106.00px;height:36.375px">0</div>
<div class="cell vl" style="left:1135.00px;top:745.025px;width:149.00px;height:36.375px">1</div>
<div class="cell vl" style="left:1286.00px;top:745.025px;width:106.00px;height:36.375px">0</div>
<div class="cell vl" style="left:1394.00px;top:745.025px;width:106.00px;height:36.375px">0</div>
<div class="cell vl" style="left:1502.00px;top:745.025px;width:149.00px;height:36.375px">5</div>
<div class="cell vl" style="left:1653.00px;top:745.025px;width:107.00px;height:36.375px">0</div>
<div class="cell vl" style="left:1762.00px;top:745.025px;width:106.00px;height:36.375px">22</div>
<div class="cell nm" style="left:121.00px;top:783.400px;width:169.00px;height:36.375px">Helen Uppalapati</div>
<div class="cell vl" style="left:292.00px;top:783.400px;width:106.00px;height:36.375px">3</div>
<div class="cell vl" style="left:400.00px;top:783.400px;width:149.00px;height:36.375px">2</div>
<div class="cell vl" style="left:551.00px;top:783.400px;width:106.00px;height:36.375px">0</div>
<div class="cell vl" style="left:659.00px;top:783.400px;width:107.00px;height:36.375px">0</div>
<div class="cell vl" style="left:768.00px;top:783.400px;width:148.00px;height:36.375px">0</div>
<div class="cell vl" style="left:918.00px;top:783.400px;width:107.00px;height:36.375px">0</div>
<div class="cell vl" style="left:1027.00px;top:783.400px;width:106.00px;height:36.375px">0</div>
<div class="cell vl" style="left:1135.00px;top:783.400px;width:149.00px;height:36.375px">1</div>
<div class="cell vl" style="left:1286.00px;top:783.400px;width:106.00px;height:36.375px">0</div>
<div class="cell vl" style="left:1394.00px;top:783.400px;width:106.00px;height:36.375px">0</div>
<div class="cell vl" style="left:1502.00px;top:783.400px;width:149.00px;height:36.375px">0</div>
<div class="cell vl" style="left:1653.00px;top:783.400px;width:107.00px;height:36.375px">0</div>
<div class="cell vl" style="left:1762.00px;top:783.400px;width:106.00px;height:36.375px">6</div>
<div class="cell nm" style="left:121.00px;top:821.775px;width:169.00px;height:36.375px">M.P Eshwera Rao</div>
<div class="cell vl" style="left:292.00px;top:821.775px;width:106.00px;height:36.375px">0</div>
<div class="cell vl" style="left:400.00px;top:821.775px;width:149.00px;height:36.375px">0</div>
<div class="cell vl" style="left:551.00px;top:821.775px;width:106.00px;height:36.375px">0</div>
<div class="cell vl" style="left:659.00px;top:821.775px;width:107.00px;height:36.375px">0</div>
<div class="cell vl" style="left:768.00px;top:821.775px;width:148.00px;height:36.375px">0</div>
<div class="cell vl" style="left:918.00px;top:821.775px;width:107.00px;height:36.375px">0</div>
<div class="cell vl" style="left:1027.00px;top:821.775px;width:106.00px;height:36.375px">1</div>
<div class="cell vl" style="left:1135.00px;top:821.775px;width:149.00px;height:36.375px">1</div>
<div class="cell vl" style="left:1286.00px;top:821.775px;width:106.00px;height:36.375px">0</div>
<div class="cell vl" style="left:1394.00px;top:821.775px;width:106.00px;height:36.375px">0</div>
<div class="cell vl" style="left:1502.00px;top:821.775px;width:149.00px;height:36.375px">2</div>
<div class="cell vl" style="left:1653.00px;top:821.775px;width:107.00px;height:36.375px">0</div>
<div class="cell vl" style="left:1762.00px;top:821.775px;width:106.00px;height:36.375px">4</div>
<div class="cell nm" style="left:121.00px;top:860.150px;width:169.00px;height:36.375px">Safia Shaik</div>
<div class="cell vl" style="left:292.00px;top:860.150px;width:106.00px;height:36.375px">4</div>
<div class="cell vl" style="left:400.00px;top:860.150px;width:149.00px;height:36.375px">0</div>
<div class="cell vl" style="left:551.00px;top:860.150px;width:106.00px;height:36.375px">0</div>
<div class="cell vl" style="left:659.00px;top:860.150px;width:107.00px;height:36.375px">1</div>
<div class="cell vl" style="left:768.00px;top:860.150px;width:148.00px;height:36.375px">0</div>
<div class="cell vl" style="left:918.00px;top:860.150px;width:107.00px;height:36.375px">0</div>
<div class="cell vl" style="left:1027.00px;top:860.150px;width:106.00px;height:36.375px">24</div>
<div class="cell vl" style="left:1135.00px;top:860.150px;width:149.00px;height:36.375px">4</div>
<div class="cell vl" style="left:1286.00px;top:860.150px;width:106.00px;height:36.375px">0</div>
<div class="cell vl" style="left:1394.00px;top:860.150px;width:106.00px;height:36.375px">0</div>
<div class="cell vl" style="left:1502.00px;top:860.150px;width:149.00px;height:36.375px">1</div>
<div class="cell vl" style="left:1653.00px;top:860.150px;width:107.00px;height:36.375px">0</div>
<div class="cell vl" style="left:1762.00px;top:860.150px;width:106.00px;height:36.375px">34</div>
<div class="cell nm" style="left:121.00px;top:898.525px;width:169.00px;height:36.375px">Kalpana Madasu</div>
<div class="cell vl" style="left:292.00px;top:898.525px;width:106.00px;height:36.375px">31</div>
<div class="cell vl" style="left:400.00px;top:898.525px;width:149.00px;height:36.375px">3</div>
<div class="cell vl" style="left:551.00px;top:898.525px;width:106.00px;height:36.375px">3</div>
<div class="cell vl" style="left:659.00px;top:898.525px;width:107.00px;height:36.375px">0</div>
<div class="cell vl" style="left:768.00px;top:898.525px;width:148.00px;height:36.375px">5</div>
<div class="cell vl" style="left:918.00px;top:898.525px;width:107.00px;height:36.375px">1</div>
<div class="cell vl" style="left:1027.00px;top:898.525px;width:106.00px;height:36.375px">0</div>
<div class="cell vl" style="left:1135.00px;top:898.525px;width:149.00px;height:36.375px">2</div>
<div class="cell vl" style="left:1286.00px;top:898.525px;width:106.00px;height:36.375px">0</div>
<div class="cell vl" style="left:1394.00px;top:898.525px;width:106.00px;height:36.375px">0</div>
<div class="cell vl" style="left:1502.00px;top:898.525px;width:149.00px;height:36.375px">0</div>
<div class="cell vl" style="left:1653.00px;top:898.525px;width:107.00px;height:36.375px">0</div>
<div class="cell vl" style="left:1762.00px;top:898.525px;width:106.00px;height:36.375px">45</div>
<div class="cell nm" style="left:121.00px;top:936.900px;width:169.00px;height:36.375px">Sirisha Somula</div>
<div class="cell vl" style="left:292.00px;top:936.900px;width:106.00px;height:36.375px">0</div>
<div class="cell vl" style="left:400.00px;top:936.900px;width:149.00px;height:36.375px">0</div>
<div class="cell vl" style="left:551.00px;top:936.900px;width:106.00px;height:36.375px">0</div>
<div class="cell vl" style="left:659.00px;top:936.900px;width:107.00px;height:36.375px">0</div>
<div class="cell vl" style="left:768.00px;top:936.900px;width:148.00px;height:36.375px">1</div>
<div class="cell vl" style="left:918.00px;top:936.900px;width:107.00px;height:36.375px">0</div>
<div class="cell vl" style="left:1027.00px;top:936.900px;width:106.00px;height:36.375px">0</div>
<div class="cell vl" style="left:1135.00px;top:936.900px;width:149.00px;height:36.375px">0</div>
<div class="cell vl" style="left:1286.00px;top:936.900px;width:106.00px;height:36.375px">0</div>
<div class="cell vl" style="left:1394.00px;top:936.900px;width:106.00px;height:36.375px">0</div>
<div class="cell vl" style="left:1502.00px;top:936.900px;width:149.00px;height:36.375px">1</div>
<div class="cell vl" style="left:1653.00px;top:936.900px;width:107.00px;height:36.375px">0</div>
<div class="cell vl" style="left:1762.00px;top:936.900px;width:106.00px;height:36.375px">2</div>
<div class="cell tl" style="left:121.00px;top:975.275px;width:169.00px;height:36.375px">Total</div>
<div class="cell tv" style="left:292.00px;top:975.275px;width:106.00px;height:36.375px">84</div>
<div class="cell tv" style="left:400.00px;top:975.275px;width:149.00px;height:36.375px">39</div>
<div class="cell tv" style="left:551.00px;top:975.275px;width:106.00px;height:36.375px">6</div>
<div class="cell tv" style="left:659.00px;top:975.275px;width:107.00px;height:36.375px">12</div>
<div class="cell tv" style="left:768.00px;top:975.275px;width:148.00px;height:36.375px">17</div>
<div class="cell tv" style="left:918.00px;top:975.275px;width:107.00px;height:36.375px">1</div>
<div class="cell tv" style="left:1027.00px;top:975.275px;width:106.00px;height:36.375px">30</div>
<div class="cell tv" style="left:1135.00px;top:975.275px;width:149.00px;height:36.375px">18</div>
<div class="cell tv" style="left:1286.00px;top:975.275px;width:106.00px;height:36.375px">2</div>
<div class="cell tv" style="left:1394.00px;top:975.275px;width:106.00px;height:36.375px">5</div>
<div class="cell tv" style="left:1502.00px;top:975.275px;width:149.00px;height:36.375px">12</div>
<div class="cell tv" style="left:1653.00px;top:975.275px;width:107.00px;height:36.375px">0</div>
<div class="cell tv" style="left:1762.00px;top:975.275px;width:106.00px;height:36.375px">226</div>
<div class="a" style="left:74px;top:584px;width:25px;height:169px;background:#3b4f99;border-radius:0 4px 4px 0;box-shadow:1px 3px 5px rgba(0,0,0,0.25)"></div>
<div class="a" style="left:31.5px;top:665.5px;width:110px;height:25px;transform:rotate(-90deg);color:#fff;font-size:12px;font-weight:bold;letter-spacing:0.85px;line-height:25px;white-space:nowrap;text-align:center">Modules &amp; Fields</div>
<svg class="a" style="left:78px;top:601px" width="17" height="14" viewBox="0 0 17 14"><path d="M1 6H4V13H1Z M4.5 6.5L8 2.5C8.5 1.5 10 1.5 10 3L9.5 5H15.5C16.5 5 16.5 7 15.5 7H11V8.5C12 8.5 12 10.5 11 10.5C12 10.5 12 12.5 10.5 12.5H5.5L4.5 11.5Z" fill="#3b4f99" stroke="#fff" stroke-width="1.4" stroke-linejoin="round"/></svg>
<div class="a" style="left:0;top:1056px;width:1909px;height:1px;background:#dde2ee"></div>
<div class="a" style="left:849px;top:1062px;width:215px;height:12px;overflow:hidden"><div style="margin-top:-2.4px;font-size:12.6px;font-weight:bold;line-height:16px;white-space:nowrap;color:#3a3a3a;letter-spacing:0px">Powered By <span style="color:#3a519d">Enjay IT Solutions Ltd.</span></div></div>
<div class="a" style="left:1912px;top:574px;width:5px;height:506px;border-radius:3px;background:#b9b9be"></div>
<div class="a" style="left:0;top:1078px;width:1920px;height:2px;background:#2b2b2b"></div>
<div class="a" style="left:72px;top:1078px;width:432px;height:2px;background:#bdbdbd"></div><div class="a" style="left:881px;top:1078px;width:72px;height:2px;background:#5c5c5c"></div>
<div class="a" style="left:99px;top:451px;width:1803px;height:619px;border:5px solid #fd7b22"></div>
</body></html>
